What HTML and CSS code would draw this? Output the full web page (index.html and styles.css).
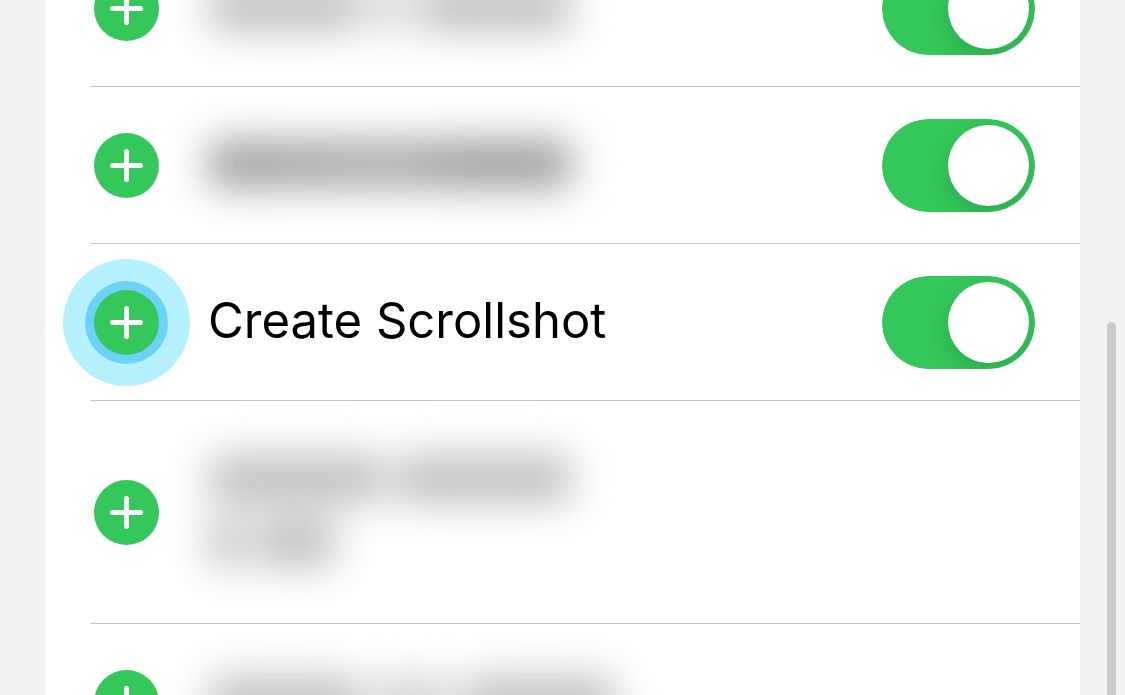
FILE: index.html
```html
<!DOCTYPE html>
<html lang="en">
<head>
<meta charset="utf-8">
<meta name="viewport" content="width=device-width, initial-scale=1">
<title>Actions</title>
<link rel="stylesheet" href="styles.css">
</head>
<body>
<svg class="symbols" aria-hidden="true">
  <symbol id="plus" viewBox="0 0 65 65">
    <path d="M32.500 18.500V46.500M18.500 32.500H46.500" fill="none" stroke="currentColor" stroke-width="5" stroke-linecap="round"/>
  </symbol>
</svg>
<main class="page">
  <ul class="list">
    <li class="row">
      <button class="add" type="button" aria-label="Add action"><svg class="plus"><use href="#plus"/></svg></button>
      <div class="redacted">
        <div class="line"><span class="word w-medium"></span><span class="word w-short faint"></span><span class="word w-medium"></span></div>
      </div>
      <input class="switch" type="checkbox" role="switch" aria-label="Enable action" checked>
    </li>
    <li class="row">
      <button class="add" type="button" aria-label="Add action"><svg class="plus"><use href="#plus"/></svg></button>
      <div class="redacted dense">
        <div class="line"><span class="word w-full"></span></div>
      </div>
      <input class="switch" type="checkbox" role="switch" aria-label="Enable action" checked>
    </li>
    <li class="row">
      <button class="add tapped" type="button" aria-label="Add Create Scrollshot"><svg class="plus"><use href="#plus"/></svg></button>
      <label class="name" for="scrollshot">Create Scrollshot</label>
      <input class="switch" id="scrollshot" type="checkbox" role="switch" checked>
    </li>
    <li class="row tall">
      <button class="add" type="button" aria-label="Add action"><svg class="plus"><use href="#plus"/></svg></button>
      <div class="redacted">
        <div class="line"><span class="word w-long"></span><span class="word w-long"></span></div>
        <div class="line"><span class="word w-short"></span><span class="word w-half"></span></div>
      </div>
    </li>
    <li class="row">
      <button class="add" type="button" aria-label="Add action"><svg class="plus"><use href="#plus"/></svg></button>
      <div class="redacted">
        <div class="line"><span class="word w-medium"></span><span class="word w-half faint"></span><span class="word w-medium"></span></div>
      </div>
    </li>
  </ul>
  <div class="scrollbar"></div>
</main>
</body>
</html>
```
FILE: styles.css
```css
* {
  box-sizing: border-box;
}

body {
  margin: 0;
  background: #f2f2f2;
  color: #000;
  font-family: Inter, "Liberation Sans", sans-serif;
}

.symbols {
  position: absolute;
  width: 0;
  height: 0;
}

.page {
  position: relative;
  height: 100vh;
  padding: 0 45px;
  overflow: hidden;
}

/* The list is scrolled part of the way through its first row. */
.list {
  margin: -70px 0 0;
  padding: 0 0 0 45px;
  background: #fff;
  list-style: none;
}

.row {
  display: flex;
  align-items: center;
  min-height: 157px;
  padding: 0 45px 0 4px;
  box-shadow: inset 0 -1px #c6c6c8;
}

.tall {
  min-height: 223px;
}

.add {
  flex: none;
  width: 65px;
  height: 65px;
  padding: 0;
  border: 0;
  border-radius: 50%;
  background: #34c759;
  color: #fff;
}

.tapped {
  box-shadow: 0 0 0 9px #6dd2f8, 0 0 0 31px #b4f1fd;
}

.plus {
  display: block;
  width: 65px;
  height: 65px;
}

.name,
.redacted {
  flex: 1;
  margin-left: 49px;
  padding-bottom: 4px;
}

.name {
  font-size: 49px;
  line-height: 64px;
}

.redacted {
  filter: blur(20px);
}

.line {
  display: flex;
  align-items: center;
  gap: 12px;
  height: 64px;
}

.word {
  height: 48px;
  border-radius: 12px;
  background: #bebebe;
}

.dense .word {
  background: linear-gradient(90deg, #9c9c9c, #acacac 50%, #9c9c9c 70%);
}

.faint {
  opacity: 0.7;
}

.w-full { width: 364px; }
.w-long { width: 176px; }
.w-medium { width: 152px; }
.w-half { width: 80px; }
.w-short { width: 36px; }

.switch {
  flex: none;
  width: 153px;
  height: 93px;
  margin: 0;
  padding: 6px;
  border-radius: 47px;
  background: #34c759;
  clip-path: inset(0 round 47px);
  appearance: none;
}

.switch::before {
  content: "";
  display: block;
  width: 81px;
  height: 81px;
  border-radius: 50%;
  background: #fff;
  box-shadow: 0 9px 24px rgba(0, 0, 0, 0.15);
}

.switch:checked::before {
  margin-left: auto;
}

.scrollbar {
  position: absolute;
  top: 322px;
  right: 9px;
  bottom: 0;
  width: 9px;
  border-radius: 5px 5px 0 0;
  background: #cacaca;
}
```
